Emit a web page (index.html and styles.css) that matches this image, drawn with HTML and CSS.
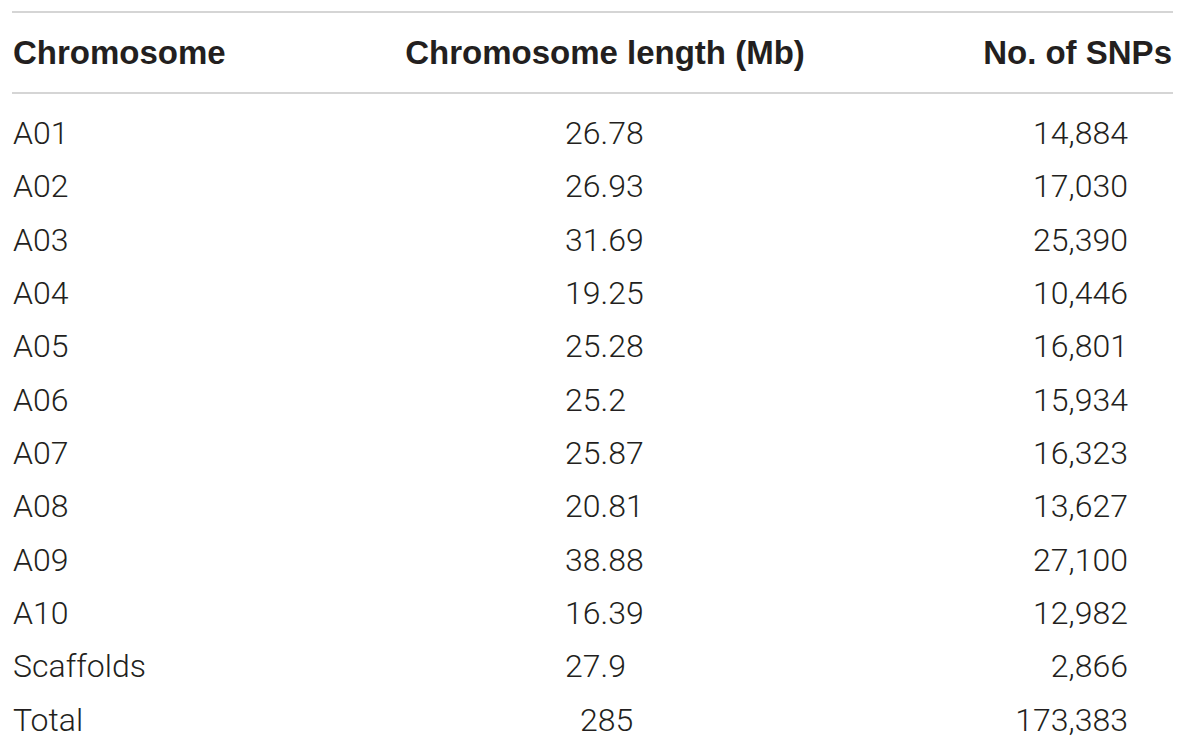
FILE: index.html
```html
<!DOCTYPE html>
<html lang="en">
<head>
<meta charset="utf-8">
<title>Chromosome SNPs</title>
<link rel="stylesheet" href="styles.css">
</head>
<body>
<table class="snp-table">
  <thead>
    <tr>
      <th class="col-name">Chromosome</th>
      <th class="col-len">Chromosome length (Mb)</th>
      <th class="col-snp">No. of SNPs</th>
    </tr>
  </thead>
  <tbody>
    <tr><td class="col-name">A01</td><td class="col-len">26.78</td><td class="col-snp">14,884</td></tr>
    <tr><td class="col-name">A02</td><td class="col-len">26.93</td><td class="col-snp">17,030</td></tr>
    <tr><td class="col-name">A03</td><td class="col-len">31.69</td><td class="col-snp">25,390</td></tr>
    <tr><td class="col-name">A04</td><td class="col-len">19.25</td><td class="col-snp">10,446</td></tr>
    <tr><td class="col-name">A05</td><td class="col-len">25.28</td><td class="col-snp">16,801</td></tr>
    <tr><td class="col-name">A06</td><td class="col-len">25.2</td><td class="col-snp">15,934</td></tr>
    <tr><td class="col-name">A07</td><td class="col-len">25.87</td><td class="col-snp">16,323</td></tr>
    <tr><td class="col-name">A08</td><td class="col-len">20.81</td><td class="col-snp">13,627</td></tr>
    <tr><td class="col-name">A09</td><td class="col-len">38.88</td><td class="col-snp">27,100</td></tr>
    <tr><td class="col-name">A10</td><td class="col-len">16.39</td><td class="col-snp">12,982</td></tr>
    <tr><td class="col-name">Scaffolds</td><td class="col-len">27.9</td><td class="col-snp">2,866</td></tr>
    <tr><td class="col-name">Total</td><td class="col-len total-len">285</td><td class="col-snp">173,383</td></tr>
  </tbody>
</table>
</body>
</html>
```

FILE: styles.css
```css
html, body {
  margin: 0;
  padding: 0;
  background: #ffffff;
}

body {
  padding: 11px 0 0 12px;
  color: #231f20;
  font-family: Roboto, "Liberation Sans", Arial, sans-serif;
}

.snp-table {
  border-collapse: collapse;
  width: 1161px;
  table-layout: fixed;
}

.snp-table th {
  font-family: "Liberation Sans", Arial, sans-serif;
  font-weight: 700;
  font-size: 33px;
  line-height: 79px;
  padding: 0;
  border-top: 2px solid #d5d5d5;
  border-bottom: 2px solid #d5d5d5;
}

.snp-table td {
  font-weight: 300;
  font-size: 32px;
  line-height: 53.35px;
  padding: 0;
}

.snp-table tbody tr:first-child td {
  padding-top: 13px;
}

.col-name {
  width: 392px;
  text-align: left;
  padding-left: 1px !important;
}

.col-len {
  width: 400px;
}

th.col-len {
  text-align: center;
}

td.col-len {
  text-align: left;
  padding-left: 160px !important;
}

td.total-len {
  padding-left: 175px !important;
}

.col-snp {
  text-align: right;
}

th.col-snp {
  padding-right: 1px !important;
}

td.col-snp {
  padding-right: 45px !important;
}
```
